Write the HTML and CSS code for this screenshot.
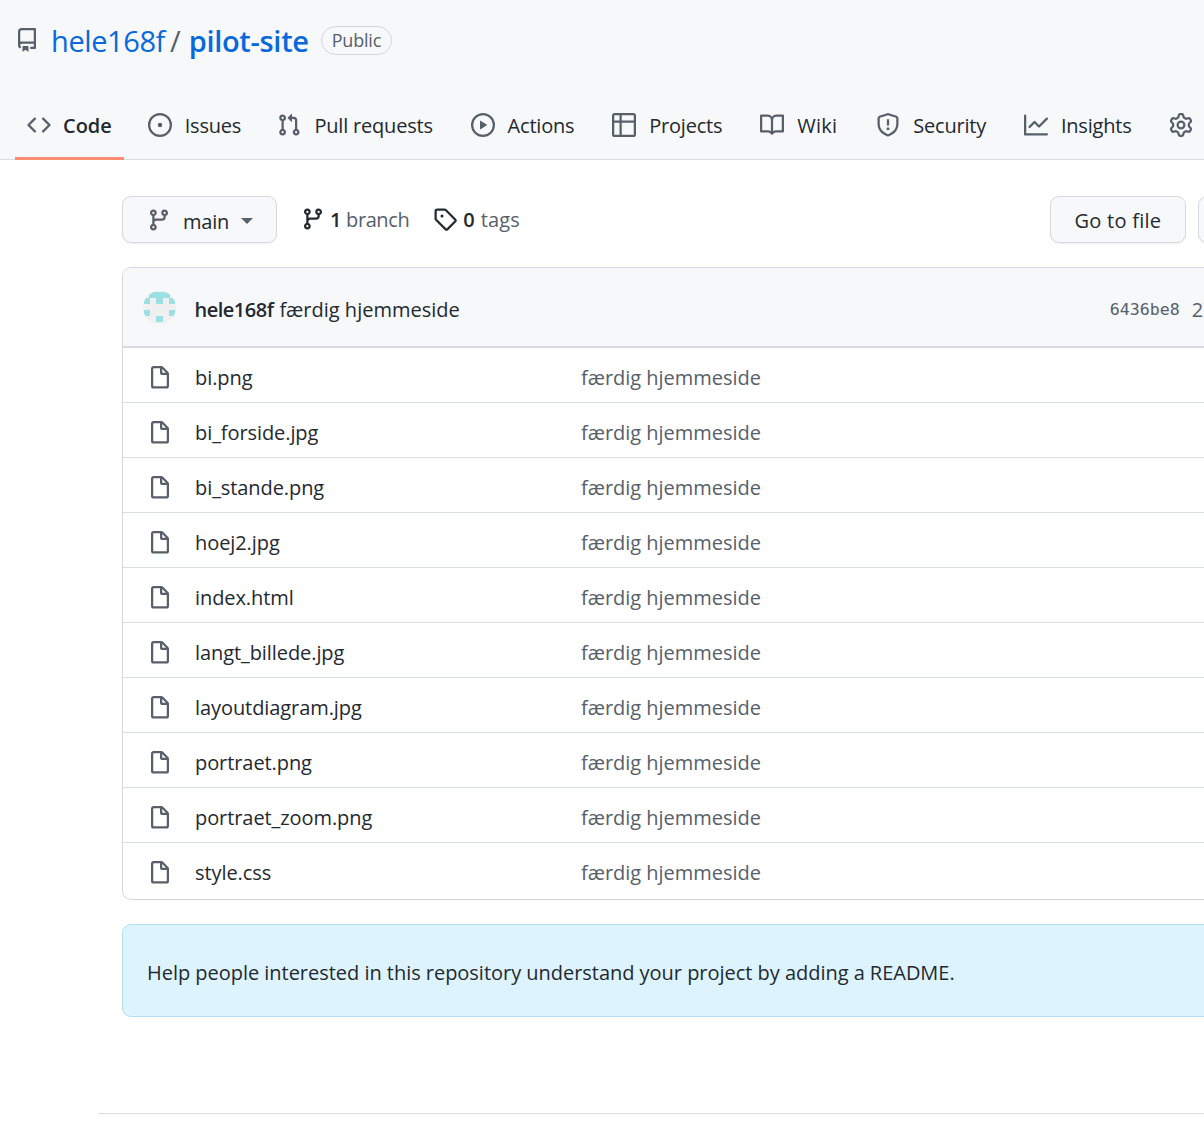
FILE: index.html
```html
<!DOCTYPE html>
<html lang="en">
<head>
<meta charset="utf-8">
<title>hele168f/pilot-site</title>
<link rel="stylesheet" href="styles.css">
</head>
<body>
<svg class="defs" width="0" height="0" aria-hidden="true">
<symbol id="i-file" viewBox="0 0 16 16"><path fill-rule="evenodd" d="M3.75 1.5a.25.25 0 00-.25.25v11.5c0 .138.112.25.25.25h8.5a.25.25 0 00.25-.25V6H9.75A1.75 1.75 0 018 4.25V1.5H3.75zm5.75.56v2.19c0 .138.112.25.25.25h2.19L9.5 2.06zM2 1.75C2 .784 2.784 0 3.75 0h5.086c.464 0 .909.184 1.237.513l3.414 3.414c.329.328.513.773.513 1.237v8.086A1.75 1.75 0 0112.25 15h-8.5A1.75 1.75 0 012 13.25V1.75z"/></symbol>
<symbol id="i-branch" viewBox="0 0 16 16"><path fill-rule="evenodd" d="M11.75 2.5a.75.75 0 100 1.5.75.75 0 000-1.5zm-2.25.75a2.25 2.25 0 113 2.122V6A2.5 2.5 0 0110 8.5H6a1 1 0 00-1 1v1.128a2.251 2.251 0 11-1.5 0V5.372a2.25 2.25 0 111.5 0v1.836A2.492 2.492 0 016 7h4a1 1 0 001-1v-.628A2.25 2.25 0 019.5 3.25zM4.25 12a.75.75 0 100 1.5.75.75 0 000-1.5zM3.5 3.25a.75.75 0 111.5 0 .75.75 0 01-1.5 0z"/></symbol>
</svg>

<header class="repo-head">
  <div class="title-row">
    <svg class="ico repo-ico" viewBox="0 0 16 16"><path fill-rule="evenodd" d="M2 2.5A2.5 2.5 0 014.5 0h8.75a.75.75 0 01.75.75v12.5a.75.75 0 01-.75.75h-2.5a.75.75 0 110-1.5h1.75v-2h-8a1 1 0 00-.714 1.7.75.75 0 01-1.072 1.05A2.495 2.495 0 012 11.5v-9zm10.5-1V9h-8c-.356 0-.694.074-1 .208V2.5a1 1 0 011-1h8zM5 12.25v3.25a.25.25 0 00.4.2l1.45-1.087a.25.25 0 01.3 0L8.6 15.7a.25.25 0 00.4-.2v-3.25a.25.25 0 00-.25-.25h-3.5a.25.25 0 00-.25.25z"/></svg>
    <a class="owner">hele168f</a>
    <span class="slash">/</span>
    <a class="repo">pilot-site</a>
    <span class="badge">Public</span>
  </div>
  <nav class="tabs">
    <a class="tab tab-active"><svg class="ico" viewBox="0 0 16 16"><path fill-rule="evenodd" d="M4.72 3.22a.75.75 0 011.06 1.06L2.06 8l3.72 3.72a.75.75 0 11-1.06 1.06L.47 8.53a.75.75 0 010-1.06l4.25-4.25zm6.56 0a.75.75 0 10-1.06 1.06L13.94 8l-3.72 3.72a.75.75 0 101.06 1.06l4.25-4.25a.75.75 0 000-1.06l-4.25-4.25z"/></svg><span>Code</span></a>
    <a class="tab tab-issues"><svg class="ico" viewBox="0 0 16 16"><path d="M8 9.5a1.5 1.5 0 100-3 1.5 1.5 0 000 3z"/><path fill-rule="evenodd" d="M8 0a8 8 0 100 16A8 8 0 008 0zM1.5 8a6.5 6.5 0 1113 0 6.5 6.5 0 01-13 0z"/></svg><span>Issues</span></a>
    <a class="tab"><svg class="ico" viewBox="0 0 16 16"><path fill-rule="evenodd" d="M7.177 3.073L9.573.677A.25.25 0 0110 .854v4.792a.25.25 0 01-.427.177L7.177 3.427a.25.25 0 010-.354zM3.75 2.5a.75.75 0 100 1.5.75.75 0 000-1.5zm-2.25.75a2.25 2.25 0 113 2.122v5.256a2.251 2.251 0 11-1.5 0V5.372A2.25 2.25 0 011.5 3.25zM11 2.5h-1V4h1a1 1 0 011 1v5.628a2.251 2.251 0 101.5 0V5A2.5 2.5 0 0011 2.5zm1 10.25a.75.75 0 111.5 0 .75.75 0 01-1.5 0zM3.75 12a.75.75 0 100 1.5.75.75 0 000-1.5z"/></svg><span>Pull requests</span></a>
    <a class="tab"><svg class="ico" viewBox="0 0 16 16"><path fill-rule="evenodd" d="M1.5 8a6.5 6.5 0 1113 0 6.5 6.5 0 01-13 0zM8 0a8 8 0 100 16A8 8 0 008 0zM6.379 5.227A.25.25 0 006 5.442v5.117a.25.25 0 00.379.214l4.264-2.559a.25.25 0 000-.428L6.379 5.227z"/></svg><span>Actions</span></a>
    <a class="tab"><svg class="ico" viewBox="0 0 16 16"><path fill-rule="evenodd" d="M0 1.75C0 .784.784 0 1.75 0h12.5C15.216 0 16 .784 16 1.75v12.5A1.75 1.75 0 0114.25 16H1.75A1.75 1.75 0 010 14.25V1.75zM6.5 6.5v8h7.75a.25.25 0 00.25-.25V6.5h-8zm0-1.5h8V1.75a.25.25 0 00-.25-.25H6.5V5zM5 6.5H1.5v7.75c0 .138.112.25.25.25H5v-8zm0-1.5V1.5H1.75a.25.25 0 00-.25.25V5H5z"/></svg><span>Projects</span></a>
    <a class="tab tab-wiki"><svg class="ico" viewBox="0 0 16 16"><path fill-rule="evenodd" d="M0 1.75A.75.75 0 01.75 1h4.253c1.227 0 2.317.59 3 1.501A3.744 3.744 0 0111.006 1h4.245a.75.75 0 01.75.75v10.5a.75.75 0 01-.75.75h-4.507a2.25 2.25 0 00-1.591.659l-.622.621a.75.75 0 01-1.06 0l-.622-.621A2.25 2.25 0 005.258 13H.75a.75.75 0 01-.75-.75V1.75zm8.755 3a2.25 2.25 0 012.25-2.25H14.5v9h-3.757c-.71 0-1.4.201-1.992.572l.004-7.322zm-1.504 7.324l.004-5.073-.002-2.253A2.25 2.25 0 005.003 2.5H1.5v9h3.757a3.75 3.75 0 011.994.574z"/></svg><span>Wiki</span></a>
    <a class="tab"><svg class="ico" viewBox="0 0 16 16"><path fill-rule="evenodd" d="M7.467.133a1.75 1.75 0 011.066 0l5.25 1.68A1.75 1.75 0 0115 3.48V7c0 1.566-.32 3.182-1.303 4.682-.983 1.498-2.585 2.813-5.032 3.855a1.7 1.7 0 01-1.33 0c-2.447-1.042-4.049-2.357-5.032-3.855C1.32 10.182 1 8.566 1 7V3.48a1.75 1.75 0 011.217-1.667l5.25-1.68zm.61 1.429a.25.25 0 00-.153 0l-5.25 1.68a.25.25 0 00-.174.238V7c0 1.358.275 2.666 1.057 3.86.784 1.194 2.121 2.34 4.366 3.297a.2.2 0 00.154 0c2.245-.956 3.582-2.104 4.366-3.298C13.225 9.666 13.5 8.36 13.5 7V3.48a.25.25 0 00-.174-.237l-5.25-1.68zM9 10.5a1 1 0 11-2 0 1 1 0 012 0zm-.25-5.75a.75.75 0 10-1.5 0v3a.75.75 0 001.5 0v-3z"/></svg><span>Security</span></a>
    <a class="tab"><svg class="ico" viewBox="0 0 16 16"><path fill-rule="evenodd" d="M1.5 1.75a.75.75 0 00-1.5 0v12.5c0 .414.336.75.75.75h14.5a.75.75 0 000-1.5H1.5V1.75zm14.28 2.53a.75.75 0 00-1.06-1.06L10 7.94 7.53 5.47a.75.75 0 00-1.06 0L3.22 8.72a.75.75 0 001.06 1.06L7 7.06l2.47 2.47a.75.75 0 001.06 0l5.25-5.25z"/></svg><span>Insights</span></a>
    <a class="tab"><svg class="ico" viewBox="0 0 16 16"><path fill-rule="evenodd" d="M7.429 1.525a6.593 6.593 0 011.142 0c.036.003.108.036.137.146l.289 1.105c.147.56.55.967.997 1.189.174.086.341.183.501.29.417.278.97.423 1.53.27l1.102-.303c.11-.03.175.016.195.046.219.31.41.641.573.989.014.031.022.11-.059.19l-.815.806c-.411.406-.562.957-.53 1.456a4.588 4.588 0 010 .582c-.032.499.119 1.05.53 1.456l.815.806c.08.08.073.159.059.19a6.494 6.494 0 01-.573.99c-.02.029-.086.074-.195.045l-1.103-.303c-.559-.153-1.112-.008-1.529.27-.16.107-.327.204-.5.29-.449.222-.851.628-.998 1.189l-.289 1.105c-.029.11-.101.143-.137.146a6.613 6.613 0 01-1.142 0c-.036-.003-.108-.037-.137-.146l-.289-1.105c-.147-.56-.55-.967-.997-1.189a4.502 4.502 0 01-.501-.29c-.417-.278-.97-.423-1.53-.27l-1.102.303c-.11.03-.175-.016-.195-.046a6.492 6.492 0 01-.573-.989c-.014-.031-.022-.11.059-.19l.815-.806c.411-.406.562-.957.53-1.456a4.587 4.587 0 010-.582c.032-.499-.119-1.05-.53-1.456l-.815-.806c-.08-.08-.073-.159-.059-.19a6.44 6.44 0 01.573-.99c.02-.029.086-.075.195-.045l1.103.303c.559.153 1.112.008 1.529-.27.16-.107.327-.204.5-.29.449-.222.851-.628.998-1.189l.289-1.105c.029-.11.101-.143.137-.146zM8 0c-.236 0-.47.01-.701.03-.743.065-1.29.615-1.458 1.261l-.29 1.106c-.017.066-.078.158-.211.224a5.994 5.994 0 00-.668.386c-.123.082-.233.09-.3.071L3.27 2.776c-.644-.177-1.392.02-1.82.63a7.977 7.977 0 00-.704 1.217c-.315.675-.111 1.422.363 1.891l.815.806c.05.048.098.147.088.294a6.084 6.084 0 000 .772c.01.147-.038.246-.088.294l-.815.806c-.474.469-.678 1.216-.363 1.891.2.428.436.835.704 1.218.428.609 1.176.806 1.82.63l1.103-.303c.066-.019.176-.011.299.071.213.143.436.272.668.386.133.066.194.158.212.224l.289 1.106c.169.646.715 1.196 1.458 1.26a8.094 8.094 0 001.402 0c.743-.064 1.29-.614 1.458-1.26l.29-1.106c.017-.066.078-.158.211-.224a5.98 5.98 0 00.668-.386c.123-.082.233-.09.3-.071l1.102.302c.644.177 1.392-.02 1.82-.63.268-.382.505-.789.704-1.217.315-.675.111-1.422-.364-1.891l-.814-.806c-.05-.048-.098-.147-.088-.294a6.1 6.1 0 000-.772c-.01-.147.039-.246.088-.294l.814-.806c.475-.469.679-1.216.364-1.891a7.992 7.992 0 00-.704-1.218c-.428-.609-1.176-.806-1.82-.63l-1.103.303c-.066.019-.176.011-.299-.071a5.991 5.991 0 00-.668-.386c-.133-.066-.194-.158-.212-.224L10.16 1.29C9.99.645 9.444.095 8.701.031A8.094 8.094 0 008 0zm1.5 8a1.5 1.5 0 11-3 0 1.5 1.5 0 013 0zM11 8a3 3 0 11-6 0 3 3 0 016 0z"/></svg></a>
  </nav>
</header>

<main class="page">
  <div class="toolbar">
    <button class="btn btn-branch"><svg class="ico"><use href="#i-branch"/></svg><span>main</span><i class="caret"></i></button>
    <a class="stat stat-branch"><svg class="ico ico-dark"><use href="#i-branch"/></svg><b>1</b> <span>branch</span></a>
    <a class="stat stat-tags"><svg class="ico ico-dark" viewBox="0 0 16 16"><path fill-rule="evenodd" d="M2.5 7.775V2.75a.25.25 0 01.25-.25h5.025a.25.25 0 01.177.073l6.25 6.25a.25.25 0 010 .354l-5.025 5.025a.25.25 0 01-.354 0l-6.25-6.25a.25.25 0 01-.073-.177zm-1.5 0V2.75C1 1.784 1.784 1 2.75 1h5.025c.464 0 .91.184 1.238.513l6.25 6.25a1.75 1.75 0 010 2.474l-5.026 5.026a1.75 1.75 0 01-2.474 0l-6.25-6.25A1.75 1.75 0 011 7.775zM6 5a1 1 0 100 2 1 1 0 000-2z"/></svg><b>0</b> <span>tags</span></a>
    <div class="toolbar-right">
      <button class="btn btn-file"><span class="btn-label">Go to file</span></button>
      <button class="btn btn-add"><span class="btn-label">Add file</span></button>
    </div>
  </div>

  <section class="files">
    <div class="commit">
      <svg class="avatar" viewBox="0 0 33 33"><rect width="33" height="33" fill="#f0f0f0"/><g fill="#9be0e4"><rect x="6" y="1" width="21" height="6"/><rect x="1" y="7" width="6" height="6"/><rect x="13" y="7" width="7" height="6"/><rect x="26" y="7" width="6" height="6"/><rect x="1" y="19" width="6" height="6"/><rect x="26" y="19" width="6" height="6"/><rect x="13" y="25" width="7" height="6"/></g></svg>
      <b class="commit-author">hele168f</b>
      <span class="commit-msg">færdig hjemmeside</span>
      <div class="commit-meta"><code class="sha">6436be8</code><span class="age">27 minutes ago</span></div>
    </div>
    <div class="row"><svg class="ico file-ico"><use href="#i-file"/></svg><span class="name">bi.png</span><span class="msg">færdig hjemmeside</span></div>
    <div class="row"><svg class="ico file-ico"><use href="#i-file"/></svg><span class="name">bi_forside.jpg</span><span class="msg">færdig hjemmeside</span></div>
    <div class="row"><svg class="ico file-ico"><use href="#i-file"/></svg><span class="name">bi_stande.png</span><span class="msg">færdig hjemmeside</span></div>
    <div class="row"><svg class="ico file-ico"><use href="#i-file"/></svg><span class="name">hoej2.jpg</span><span class="msg">færdig hjemmeside</span></div>
    <div class="row"><svg class="ico file-ico"><use href="#i-file"/></svg><span class="name">index.html</span><span class="msg">færdig hjemmeside</span></div>
    <div class="row"><svg class="ico file-ico"><use href="#i-file"/></svg><span class="name">langt_billede.jpg</span><span class="msg">færdig hjemmeside</span></div>
    <div class="row"><svg class="ico file-ico"><use href="#i-file"/></svg><span class="name">layoutdiagram.jpg</span><span class="msg">færdig hjemmeside</span></div>
    <div class="row"><svg class="ico file-ico"><use href="#i-file"/></svg><span class="name">portraet.png</span><span class="msg">færdig hjemmeside</span></div>
    <div class="row"><svg class="ico file-ico"><use href="#i-file"/></svg><span class="name">portraet_zoom.png</span><span class="msg">færdig hjemmeside</span></div>
    <div class="row"><svg class="ico file-ico"><use href="#i-file"/></svg><span class="name">style.css</span><span class="msg">færdig hjemmeside</span></div>
  </section>

  <div class="flash">Help people interested in this repository understand your project by adding a README.</div>
</main>
<footer class="foot"></footer>
</body>
</html>
```

FILE: styles.css
```css
* { box-sizing: border-box; }
html, body { margin: 0; padding: 0; }
body {
  width: 1204px;
  height: 1147px;
  overflow: hidden;
  background: #fff;
  color: #24292f;
  font-family: "Open Sans", "Noto Sans", sans-serif;
  font-size: 20px;
}
.defs { position: absolute; }
.ico { width: 24px; height: 24px; fill: #57606a; flex: none; display: block; }
.ico-dark { fill: #24292f; }

.repo-head {
  background: #f6f8fa;
  border-bottom: 1px solid #d8dee4;
  height: 160px;
  width: 1204px;
}
.title-row {
  display: flex;
  align-items: center;
  height: 80px;
  padding-left: 15px;
  font-size: 29px;
  white-space: nowrap;
}
.repo-ico { margin-right: 12px; }
.owner { color: #0969da; letter-spacing: -0.4px; }
.slash { color: #57606a; margin: 0 8px 0 5px; }
.repo { color: #0969da; font-weight: 600; letter-spacing: -0.3px; }
.badge {
  margin-left: 12px;
  height: 29px;
  padding: 0 10px;
  border: 1px solid #d0d7de;
  border-radius: 15px;
  font-size: 18px;
  line-height: 26px;
  letter-spacing: -0.2px;
  color: #57606a;
}
.tabs {
  display: flex;
  height: 79px;
  padding-left: 15px;
  white-space: nowrap;
}
.tab {
  display: flex;
  align-items: center;
  gap: 13px;
  height: 80px;
  padding: 13px 12px 0;
  margin-right: 13.8px;
  border-bottom: 3px solid transparent;
  letter-spacing: -0.2px;
}
.tab .ico { margin-top: -1px; }
.tab-active { border-bottom-color: #fd8c73; font-weight: 600; gap: 12px; margin-right: 12px; letter-spacing: -0.05px; }
.tab-issues { margin-right: 12.3px; }
.tab-wiki { margin-right: 14.8px; letter-spacing: 0.3px; }

.page { padding: 36px 0 0 122px; width: 1500px; }
.toolbar { display: flex; align-items: center; height: 47px; white-space: nowrap; }
.btn {
  height: 47px;
  background: #f6f8fa;
  border: 1.5px solid #d5d9dd;
  border-radius: 9px;
  color: #24292f;
  font: inherit;
  box-shadow: 0 1.5px 0 rgba(27, 31, 36, 0.04);
  padding: 2px 0 0;
}
.btn-branch { display: flex; align-items: center; width: 155px; padding: 3px 24px 0; gap: 12px; letter-spacing: -0.2px; }
.btn-branch .ico { margin-top: -3px; }
.caret {
  width: 0;
  height: 0;
  border: 6px solid transparent;
  border-top-color: #57606a;
  border-bottom: 0;
}
.stat { display: flex; align-items: center; gap: 5px; color: #57606a; margin-top: -1px; letter-spacing: -0.4px; }
.stat b { color: #24292f; font-weight: 600; }
.stat-branch { margin-left: 24px; }
.stat-tags { margin-left: 24px; letter-spacing: 0.1px; gap: 6px; }
.toolbar-right { display: flex; gap: 12px; margin-left: 530px; }
.btn-file { width: 136px; letter-spacing: 0.25px; }
.btn-add { width: 120px; }

.files {
  margin-top: 24px;
  width: 1300px;
  border: 1.5px solid #d5d9dd;
  border-radius: 9px;
  overflow: hidden;
}
.commit {
  display: flex;
  align-items: center;
  height: 80px;
  background: #f6f8fa;
  padding-left: 19.5px;
  padding-top: 4px;
  border-bottom: 2px solid #d8dce0;
  white-space: nowrap;
}
.avatar { width: 33px; height: 33px; flex: none; margin-right: 19px; margin-top: -4px; border-radius: 50%; }
.commit-author { font-weight: 600; margin-right: 6px; letter-spacing: -0.5px; }
.commit-meta { display: flex; gap: 12px; margin-left: 650px; }
.sha { font-family: "DejaVu Sans Mono", monospace; font-size: 16.6px; color: #57606a; align-self: center; }
.age { color: #57606a; }
.row {
  display: flex;
  align-items: center;
  height: 55px;
  border-top: 1px solid #d8dee4;
  padding: 5px 0 0 25px;
  white-space: nowrap;
  letter-spacing: -0.08px;
}
.commit + .row { border-top: 0; height: 54px; }
.row:last-child { height: 57px; padding-top: 3px; }
.file-ico { margin-right: 23px; }
.name { width: 386px; flex: none; }
.msg { color: #57606a; letter-spacing: -0.02px; }

.flash {
  margin-top: 24px;
  width: 1300px;
  height: 93px;
  padding: 4px 0 0 24px;
  display: flex;
  align-items: center;
  background: #ddf4ff;
  border: 1.5px solid #b6dcf3;
  border-radius: 9px;
  letter-spacing: -0.03px;
  white-space: nowrap;
}
.foot {
  margin: 96px 0 0 98px;
  width: 1300px;
  border-top: 1px solid #d8dee4;
}
```
